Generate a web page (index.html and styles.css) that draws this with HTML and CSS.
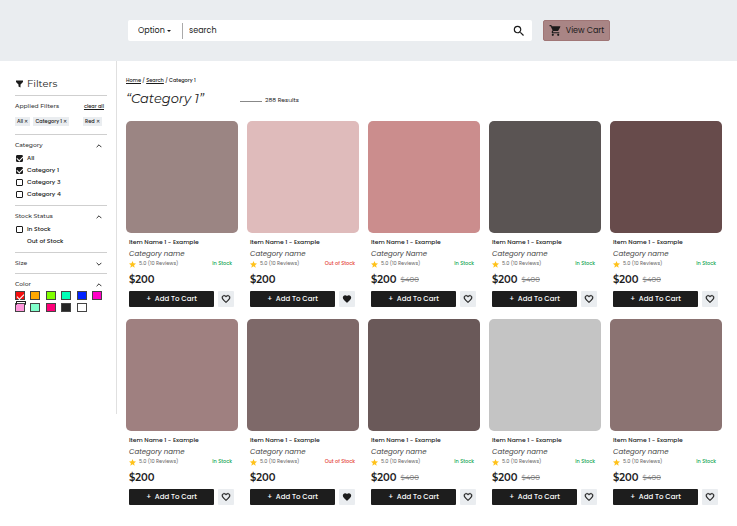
FILE: index.html
```html
<!DOCTYPE html>
<html lang="en">
<head>
<meta charset="utf-8">
<title>Category 1</title>
<meta name="viewport" content="width=device-width, initial-scale=1">
<link rel="stylesheet" href="styles.css">
</head>
<body>
<svg class="sprite" aria-hidden="true">
  <symbol id="i-heart" viewBox="0 0 24 24"><path d="M16.5 3c-1.74 0-3.41.81-4.5 2.09C10.91 3.81 9.24 3 7.5 3 4.42 3 2 5.42 2 8.5c0 3.78 3.4 6.86 8.55 11.54L12 21.35l1.45-1.32C18.6 15.36 22 12.28 22 8.5 22 5.42 19.58 3 16.5 3zm-4.4 15.55l-.1.1-.1-.1C7.14 14.24 4 11.39 4 8.5 4 6.5 5.5 5 7.5 5c1.54 0 3.04.99 3.57 2.36h1.87C13.46 5.99 14.96 5 16.5 5c2 0 3.5 1.5 3.5 3.5 0 2.89-3.14 5.74-7.9 10.05z" stroke="currentColor" stroke-width="0.8"/></symbol>
  <symbol id="i-heart-full" viewBox="0 0 24 24"><path d="M12 21.35l-1.45-1.32C5.4 15.36 2 12.28 2 8.5 2 5.42 4.42 3 7.5 3c1.74 0 3.41.81 4.5 2.09C13.09 3.81 14.76 3 16.5 3 19.58 3 22 5.42 22 8.5c0 3.78-3.4 6.86-8.55 11.54z"/></symbol>
  <symbol id="i-star" viewBox="0 0 24 24"><path d="M12 18.3L19.4 23l-2-8.6L24 8.6l-8.7-.7L12 0 8.7 7.9 0 8.6l6.6 5.8-2 8.6z"/></symbol>
  <symbol id="i-up" viewBox="0 0 10 6"><path d="M1 5l4-4 4 4" fill="none" stroke="currentColor" stroke-width="1.5"/></symbol>
  <symbol id="i-down" viewBox="0 0 10 6"><path d="M1 1l4 4 4-4" fill="none" stroke="currentColor" stroke-width="1.5"/></symbol>
</svg>

<header class="topbar">
  <form class="search" role="search">
    <span class="picker">
      <select class="picker-select" aria-label="Search in"><option>Option</option></select>
      <svg class="picker-caret" viewBox="0 0 4 2"><path d="M0 0h4L2 2z"/></svg>
    </span>
    <input class="search-input" type="text" value="search" aria-label="Search">
    <button class="search-button" type="button" aria-label="Submit search">
      <svg viewBox="0 0 24 24"><path d="M15.5 14h-.79l-.28-.27A6.47 6.47 0 0 0 16 9.5 6.5 6.5 0 1 0 9.5 16c1.61 0 3.09-.59 4.23-1.57l.27.28v.79l5 4.99L20.49 19zm-6 0C7.01 14 5 11.99 5 9.5S7.01 5 9.5 5 14 7.01 14 9.5 11.99 14 9.5 14z"/></svg>
    </button>
  </form>
  <button class="cart" type="button">
    <svg viewBox="0 0 24 24"><path d="M7 18c-1.1 0-1.99.9-1.99 2S5.9 22 7 22s2-.9 2-2-.9-2-2-2zM1 2v2h2l3.6 7.59-1.35 2.45C5.09 14.32 5 14.65 5 15c0 1.1.9 2 2 2h12v-2H7.42c-.14 0-.25-.11-.25-.25l.03-.12.9-1.63h7.45c.75 0 1.41-.41 1.75-1.03l3.58-6.49A1 1 0 0 0 20 4H5.21l-.94-2zm16 16c-1.1 0-1.99.9-1.99 2s.89 2 1.99 2 2-.9 2-2-.9-2-2-2z"/></svg>
    View Cart
  </button>
</header>

<div class="page">
  <aside class="sidebar">
    <h2 class="filters-title">
      <svg viewBox="0 0 16 16"><path d="M1 1h14v3l-5 5v6l-4-2V9L1 4z"/></svg>
      Filters
    </h2>

    <section class="group group-closed">
      <div class="group-head"><h3>Applied Filters</h3><a class="clear" href="#">clear all</a></div>
      <div class="chips">
        <button type="button" class="chip">All <span>✕</span></button>
        <button type="button" class="chip">Category 1 <span>✕</span></button>
        <button type="button" class="chip chip-last">Red <span>✕</span></button>
      </div>
    </section>

    <section class="group">
      <div class="group-head"><h3>Category</h3><svg class="chevron"><use href="#i-up"/></svg></div>
      <label class="option"><input class="tick" type="checkbox" checked>All</label>
      <label class="option"><input class="tick" type="checkbox" checked>Category 1</label>
      <label class="option"><input class="tick" type="checkbox">Category 3</label>
      <label class="option"><input class="tick" type="checkbox">Category 4</label>
    </section>

    <section class="group">
      <div class="group-head"><h3>Stock Status</h3><svg class="chevron"><use href="#i-up"/></svg></div>
      <label class="option"><input class="tick" type="checkbox">In Stock</label>
      <label class="option"><input class="tick tick-blank" type="checkbox">Out of Stock</label>
    </section>

    <section class="group group-closed">
      <div class="group-head"><h3>Size</h3><svg class="chevron"><use href="#i-down"/></svg></div>
    </section>

    <section class="group">
      <div class="group-head"><h3>Color</h3><svg class="chevron"><use href="#i-up"/></svg></div>
      <div class="swatches">
        <input type="checkbox" class="swatch red" aria-label="Red" checked>
        <input type="checkbox" class="swatch orange" aria-label="Orange">
        <input type="checkbox" class="swatch lime" aria-label="Lime">
        <input type="checkbox" class="swatch teal" aria-label="Teal">
        <input type="checkbox" class="swatch blue" aria-label="Blue">
        <input type="checkbox" class="swatch magenta" aria-label="Magenta">
        <input type="checkbox" class="swatch pink" aria-label="Pink">
        <input type="checkbox" class="swatch mint" aria-label="Mint">
        <input type="checkbox" class="swatch rose" aria-label="Rose">
        <input type="checkbox" class="swatch black" aria-label="Black">
        <input type="checkbox" class="swatch white" aria-label="White">
      </div>
    </section>
  </aside>

  <main class="content">
    <nav class="crumbs"><a href="#">Home</a> / <a href="#">Search</a> / Category 1</nav>
    <div class="heading">
      <h1>“Category 1”</h1>
      <p class="results">288 Results</p>
    </div>
    <div class="grid" id="grid"></div>
  </main>
</div>
<script src="script.js"></script>
</body>
</html>
```
FILE: styles.css
```css
* { box-sizing: border-box; }

body {
  margin: 0;
  background: #fff;
  color: #1b1b1b;
  font-family: Poppins, Inter, "Liberation Sans", sans-serif;
  font-size: 6px;
}

h1, h2, h3, p { margin: 0; font-weight: 400; }
button, input, select { font: inherit; color: inherit; margin: 0; border: 0; padding: 0; background: none; }
svg { fill: currentColor; flex: none; }
a { color: inherit; }
.sprite { display: none; }

.topbar {
  display: flex;
  gap: 11px;
  padding: 20px 127px 20px 128px;
  background: #eaedf0;
}

.search {
  flex: 1;
  display: flex;
  align-items: center;
  height: 21px;
  border-radius: 2px;
  background: #fff;
  font-size: 8px;
}
.picker {
  display: flex;
  align-items: center;
  width: 55px;
  height: 16px;
  padding-left: 10px;
  border-right: 1px solid #aaa;
}
.picker-select { appearance: none; width: 29px; line-height: 12px; }
.picker-caret { width: 4px; height: 2px; }
.search-input { flex: 1; min-width: 0; padding-left: 6px; }
.search-button { display: flex; margin-right: 6px; }
.search-button svg { width: 14px; height: 14px; }

.cart {
  display: flex;
  align-items: center;
  justify-content: center;
  gap: 4px;
  height: 21px;
  width: 67px;
  border: 1px solid #a07676;
  border-radius: 2px;
  background: #a98585;
  font-size: 8px;
  white-space: nowrap;
}
.cart svg { width: 13px; height: 13px; }

.page { display: flex; align-items: flex-start; }

.sidebar {
  flex: none;
  width: 117px;
  min-height: 353px;
  padding: 11px 9px 0 15px;
  border-right: 1px solid #e0e0e0;
}
.filters-title, .group-head h3, .heading h1, .price {
  font-family: Montserrat, Poppins, Inter, sans-serif;
}
.filters-title {
  display: flex;
  align-items: center;
  gap: 3px;
  height: 23px;
  font-size: 10px;
  line-height: 20px;
}
.filters-title svg { width: 9px; height: 8px; }

.group { padding: 4px 0 5px; border-top: 1px solid #cfcfcf; }
.group-closed { padding: 4px 0 3px; }
.group-head { display: flex; align-items: center; justify-content: space-between; height: 13px; }
.group-head h3 { font-size: 6px; line-height: 13px; font-weight: 500; color: #333; }
.clear { padding-right: 3px; font-size: 5px; font-weight: 500; }
.chevron { width: 6px; height: 4px; margin-right: 5px; }
.chips { display: flex; gap: 3px; padding: 4px 5px 5px 0; }
.chip { padding: 0 2px; background: #eaedf0; font-size: 5px; font-weight: 500; line-height: 9px; white-space: nowrap; }
.chip-last { margin-left: auto; }

.option { display: flex; align-items: center; gap: 4px; height: 12px; padding-left: 1px; font-size: 6px; font-weight: 500; }
.tick {
  appearance: none;
  display: grid;
  place-items: center;
  width: 7px;
  height: 7px;
  border: 1px solid #1b1b1b;
  border-radius: 1px;
}
.tick:checked { background: #1b1b1b; }
.tick:checked::before, .swatch:checked::before {
  content: "";
  width: 5px;
  height: 3px;
  border: solid #fff;
  border-width: 0 0 1px 1px;
  rotate: -45deg;
}
.swatch:checked::before { width: 6px; height: 3px; }
.tick-blank { border-color: transparent; }

.swatches { display: grid; grid-template-columns: repeat(6, 10px); justify-content: space-between; row-gap: 3px; padding-right: 5px; }
.swatch {
  appearance: none;
  position: relative;
  display: grid;
  place-items: center;
  width: 10px;
  height: 9px;
  border: 1px solid #444;
}
.red { background: #f50d0d; }
.orange { background: #ffa800; }
.lime { background: #80ff00; }
.teal { background: #00ffb7; }
.blue { background: #0022ff; }
.magenta { background: #ff00c7; }
.pink { background: #ff96dc; }
.mint { background: #80ffcb; }
.rose { background: #ff0078; }
.black { background: #262626; }
.white { background: #fff; }
.pink::after {
  content: "";
  position: absolute;
  left: 0;
  top: -3px;
  width: 8px;
  height: 3px;
  border: 1px solid #1b1b1b;
  border-bottom: 0;
  border-radius: 1px;
}

.content { flex: 1; min-width: 0; padding: 15px 15px 20px 9px; }
.crumbs { font-size: 5px; line-height: 10px; font-weight: 500; }
.heading { display: flex; gap: 36px; padding: 1px 0 11px; }
.heading h1 { font-size: 13px; line-height: 22px; font-style: italic; }
.results { display: flex; align-items: center; gap: 3px; padding-top: 3px; line-height: 20px; }
.results::before { content: ""; width: 22px; height: 1px; margin-top: 3px; background: #888; }

.grid { display: grid; grid-template-columns: repeat(5, 1fr); gap: 12px 9px; }
.photo { aspect-ratio: 1; margin-bottom: 3px; border-radius: 5px; }
.info { padding: 0 4px 0 3px; }
.name { font-size: 6px; line-height: 12px; font-weight: 500; white-space: nowrap; }
.kind { font-size: 7px; line-height: 11px; font-style: italic; color: #444; }
.meta { display: flex; align-items: center; height: 10px; padding-right: 2px; font-size: 5px; color: #666; }
.meta-out { padding-right: 0; }
.meta svg { width: 7px; height: 7px; margin-right: 3px; color: #ffc21a; }
.stock { margin-left: auto; font-weight: 500; color: #16a757; }
.stock-out { color: #e5483d; }
.price { display: flex; align-items: center; gap: 4px; height: 20px; font-size: 10px; font-weight: 600; }
.price s { font-size: 7px; font-weight: 400; color: #777; }
.actions { display: flex; gap: 4px; padding-top: 2px; }
.add {
  flex: 1;
  height: 16px;
  border-radius: 1px;
  background: #1d1d1d;
  color: #fff;
  font-size: 7px;
  font-weight: 500;
  line-height: 16px;
  white-space: pre;
}
.like { display: grid; place-items: center; width: 16px; height: 16px; border-radius: 1px; background: #eaedf0; }
.like svg { width: 10px; height: 10px; }
```
FILE: script.js
```js
const items = [
  { color: "#9b8583" },
  { color: "#dfbbbb", out: true, liked: true },
  { color: "#cb8d8d", kind: "Category Name", old: "$400" },
  { color: "#5a5453", old: "$400" },
  { color: "#674b4b", old: "$400" },
  { color: "#9f8080" },
  { color: "#7e6969", out: true, liked: true },
  { color: "#6a5959", old: "$400" },
  { color: "#c4c4c4", old: "$400" },
  { color: "#8b7372", old: "$400" }
];

document.getElementById("grid").innerHTML = items.map(item => `
  <article>
    <div class="photo" style="background:${item.color}"></div>
    <div class="info">
      <h3 class="name">Item Name 1 - Example</h3>
      <p class="kind">${item.kind || "Category name"}</p>
      <div class="meta ${item.out ? "meta-out" : ""}">
        <svg><use href="#i-star"/></svg>5.0 (10 Reviews)
        <span class="stock ${item.out ? "stock-out" : ""}">${item.out ? "Out of Stock" : "In Stock"}</span>
      </div>
      <div class="price">$200${item.old ? ` <s>${item.old}</s>` : ""}</div>
      <div class="actions">
        <button class="add" type="button">+  Add To Cart</button>
        <button class="like" type="button" aria-label="Favourite"><svg><use href="#${item.liked ? "i-heart-full" : "i-heart"}"/></svg></button>
      </div>
    </div>
  </article>`).join("");
```
